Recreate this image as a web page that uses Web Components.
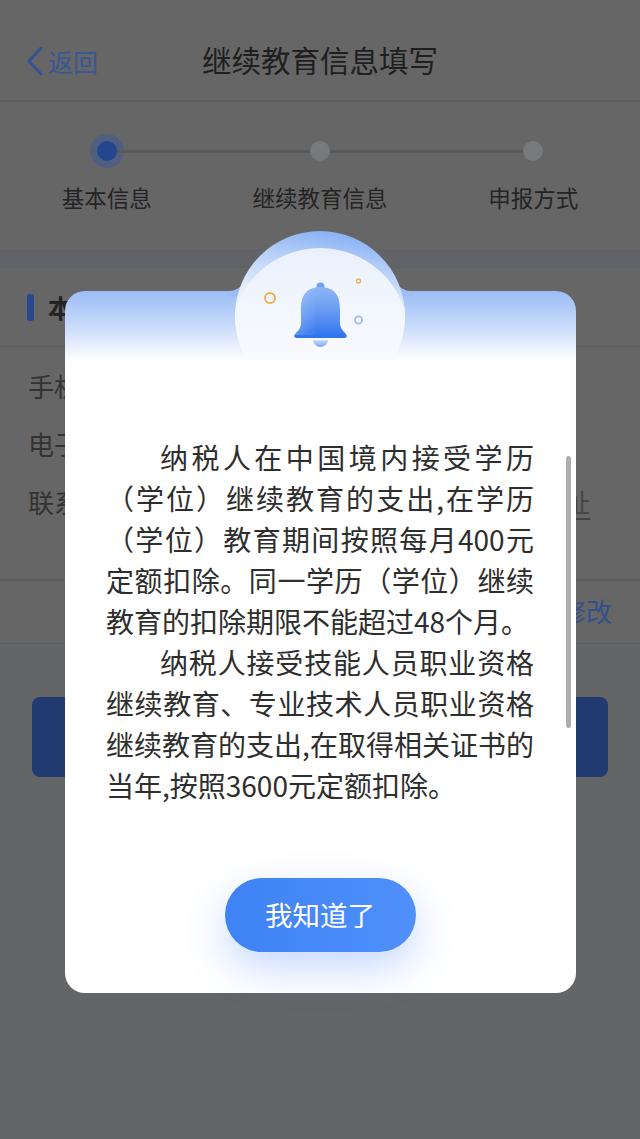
<!DOCTYPE html>
<html lang="zh-CN">
<head>
<meta charset="utf-8">
<title>继续教育信息填写</title>
<style>
html, body { margin: 0; padding: 0; background: #646566; }
body { width: 640px; height: 1139px; overflow: hidden; position: relative; font-family: "Noto Sans CJK SC", "Noto Sans", sans-serif; }
</style>
</head>
<body>
<tax-page></tax-page>
<notice-dialog>
	<p>纳税人在中国境内接受学历（学位）继续教育的支出,在学历（学位）教育期间按照每月400元定额扣除。同一学历（学位）继续教育的扣除期限不能超过48个月。</p>
	<p>纳税人接受技能人员职业资格继续教育、专业技术人员职业资格继续教育的支出,在取得相关证书的当年,按照3600元定额扣除。</p>
</notice-dialog>
<script>
// the page behind the dialog is painted directly in its dimmed colours
class NavBar extends HTMLElement {
	connectedCallback() {
		this.attachShadow({ mode: 'open' }).innerHTML = `
		<style>
		:host { display: grid; grid-template-columns: 1fr auto 1fr; align-items: center; height: 102px; padding-top: 22px; box-sizing: border-box; border-bottom: 2px solid #5d5d5d; background: #666; }
		.back { display: flex; align-items: center; gap: 5px; padding-left: 26px; font-size: 25px; color: #3a5694; }
		svg { display: block; }
		.title { font-size: 29.5px; color: #1f1f1f; line-height: 40px; padding-bottom: 4px; }
		</style>
		<div class="back">
			<svg width="17" height="30" viewBox="0 0 17 30"><path d="M15 2 L3 15 L15 28" fill="none" stroke="#345394" stroke-width="3" stroke-linecap="round" stroke-linejoin="round"/></svg>
			<span>返回</span>
		</div>
		<div class="title"><slot></slot></div>
		<div></div>`;
	}
}

class StepBar extends HTMLElement {
	connectedCallback() {
		const steps = ['基本信息', '继续教育信息', '申报方式'];
		const cells = steps.map((name, i) => `
			<div class="step">
				<div class="track">
					<i class="${i > 0 ? 'line' : ''}"></i>
					<b class="${i === 0 ? 'dot on' : 'dot'}"></b>
					<i class="${i < steps.length - 1 ? 'line' : ''}"></i>
				</div>
				<span>${name}</span>
			</div>`).join('');
		this.attachShadow({ mode: 'open' }).innerHTML = `
		<style>
		:host { display: grid; grid-template-columns: repeat(3, 1fr); height: 147px; box-sizing: border-box; padding-top: 31px; background: #666; }
		.step { display: flex; flex-direction: column; align-items: center; }
		.track { display: flex; align-items: center; width: 100%; height: 36px; }
		.track i { flex: 1; height: 3px; }
		.track i.line { background: #595959; }
		.dot { width: 20px; height: 20px; border-radius: 50%; background: #78797b; flex: none; }
		.dot.on { background: #24458f; box-shadow: 0 0 0 7px #505f7f; }
		span { margin-top: 12px; font-size: 22.5px; line-height: 32px; color: #242424; }
		</style>
		${cells}`;
	}
}

class InfoRow extends HTMLElement {
	connectedCallback() {
		this.attachShadow({ mode: 'open' }).innerHTML = `
		<style>
		:host { display: flex; justify-content: space-between; align-items: center; height: 58px; font-size: 26px; color: #333; }
		::slotted([slot=value]) { color: #444; text-decoration: underline; text-underline-offset: 5px; }
		</style>
		<slot name="label"></slot>
		<slot name="value"></slot>`;
	}
}

class TaxPage extends HTMLElement {
	connectedCallback() {
		this.attachShadow({ mode: 'open' }).innerHTML = `
		<style>
		:host { display: block; height: 1139px; background: #646566; }
		.gap { height: 19px; background: #626366; }
		.card { background: #666; }
		.head { display: flex; align-items: center; gap: 14px; height: 78px; padding-left: 27px; border-bottom: 1px solid #5f5f5f; font-size: 25px; font-weight: 700; color: #222; }
		.head i { width: 7px; height: 27px; border-radius: 3px; background: #27478f; }
		.rows { height: 234px; box-sizing: border-box; padding: 9px 50px 0 28px; border-bottom: 2px solid #5c5c5c; }
		.edit { height: 63px; box-sizing: border-box; display: flex; justify-content: flex-end; align-items: center; padding: 0 28px 4px 0; font-size: 26px; color: #344f8a; border-bottom: 1px solid #606060; }
		.next { margin: 53px 32px 0; height: 80px; border-radius: 8px; background: #213a70; }
		</style>
		<nav-bar>继续教育信息填写</nav-bar>
		<step-bar></step-bar>
		<div class="gap"></div>
		<div class="card">
			<div class="head"><i></i>本人信息</div>
			<div class="rows">
				<info-row><span slot="label">手机号码</span></info-row>
				<info-row><span slot="label">电子邮箱</span></info-row>
				<info-row><span slot="label">联系地址</span><span slot="value">详细地址</span></info-row>
			</div>
			<div class="edit">修改</div>
		</div>
		<div class="next"></div>`;
	}
}

class BellBadge extends HTMLElement {
	connectedCallback() {
		this.attachShadow({ mode: 'open' }).innerHTML = `
		<style>
		:host { display: block; width: 240px; height: 132px; }
		svg { display: block; }
		</style>
		<svg width="240" height="132" viewBox="200 228 240 132">
			<defs>
				<linearGradient id="outer" x1="0.62" y1="0" x2="0.5" y2="0.76">
					<stop offset="0" stop-color="#86aff4"/>
					<stop offset="0.28" stop-color="#bcd3f8"/>
					<stop offset="0.55" stop-color="#e6eefc"/>
					<stop offset="1" stop-color="#ffffff"/>
				</linearGradient>
				<linearGradient id="inner" x1="0" y1="0" x2="0" y2="1">
					<stop offset="0" stop-color="#eaf1fd"/>
					<stop offset="0.6" stop-color="#f8fafe"/>
					<stop offset="1" stop-color="#ffffff"/>
				</linearGradient>
				<linearGradient id="bell" x1="0" y1="0" x2="0" y2="1">
					<stop offset="0" stop-color="#8fb6f6"/>
					<stop offset="0.55" stop-color="#5f95f1"/>
					<stop offset="1" stop-color="#2d72ee"/>
				</linearGradient>
				<linearGradient id="shine" x1="0" y1="0" x2="1" y2="0">
					<stop offset="0" stop-color="#ffffff" stop-opacity=".22"/>
					<stop offset="0.5" stop-color="#ffffff" stop-opacity="0"/>
				</linearGradient>
				<linearGradient id="clap" x1="0" y1="0" x2="0" y2="1">
					<stop offset="0" stop-color="#c9dbfa"/>
					<stop offset="1" stop-color="#79a6f3"/>
				</linearGradient>
				<clipPath id="disc"><circle cx="320" cy="316" r="85"/></clipPath>
			</defs>
			<path d="M228 291 C234 291 238 289 242 285 L242 296 L228 296 Z" fill="#9cbdf7"/>
			<path d="M412 291 C406 291 402 289 398 285 L398 296 L412 296 Z" fill="#9cbdf7"/>
			<circle cx="320" cy="316" r="85" fill="url(#outer)"/>
			<circle cx="320" cy="337" r="89" fill="url(#inner)" clip-path="url(#disc)"/>
			<circle cx="270" cy="298" r="5" fill="none" stroke="#eeb154" stroke-width="2"/>
			<circle cx="358.5" cy="281" r="2" fill="none" stroke="#eeb154" stroke-width="1.4"/>
			<circle cx="358.5" cy="320" r="3.6" fill="none" stroke="#a5bdef" stroke-width="1.8"/>
			<circle cx="320.5" cy="286.5" r="4" fill="#6d9ff2"/>
			<path d="M320.5 287 C306 287 301 296 301 310 L301 324 C300.5 330 296 332 294.5 335 C293.5 337 295 338 297 338 L344 338 C346 338 347.5 337 346.5 335 C345 332 340.5 330 340 324 L340 310 C340 296 335 287 320.5 287 Z" fill="url(#bell)"/>
			<path d="M320.5 287 C306 287 301 296 301 310 L301 324 C300.5 330 296 332 294.5 335 L340 335 L340 310 C340 296 335 287 320.5 287 Z" fill="url(#shine)"/>
			<path d="M313 340 L328 340 C327.5 344 324.5 347 320.5 347 C316.5 347 313.5 344 313 340 Z" fill="url(#clap)"/>
		</svg>`;
	}
}

class NoticeDialog extends HTMLElement {
	connectedCallback() {
		this.attachShadow({ mode: 'open' }).innerHTML = `
		<style>
		:host { display: block; position: absolute; left: 65px; top: 291px; width: 511px; height: 702px; }
		.box { position: relative; height: 100%; box-sizing: border-box; padding: 146px 42px 0 41px; border-radius: 20px; background: linear-gradient(#9cbdf7, #c3d7fa 45%, #ffffff 100%) top / 100% 70px no-repeat, #fff; display: flex; flex-direction: column; align-items: center; }
		bell-badge { position: absolute; left: 135px; top: -63px; }
		.text { width: 428px; font-size: 28px; line-height: 41px; color: #2e2e2e; text-align: justify; }
		::slotted(p) { margin: 0; text-indent: 54px; }
		.thumb { position: absolute; left: 501px; top: 165px; width: 5px; height: 272px; border-radius: 3px; background: #aeaeae; }
		button { margin-top: 72px; width: 191px; height: 74px; border: 0; border-radius: 37px; background: linear-gradient(90deg, #3e82f4, #4f90fb); box-shadow: 0 16px 40px rgba(70, 130, 250, .3); color: #fff; font: 400 27.5px "Noto Sans CJK SC", sans-serif; padding: 0 0 2px; flex: none; }
		</style>
		<div class="box">
			<bell-badge></bell-badge>
			<div class="text"><slot></slot></div>
			<div class="thumb"></div>
			<button>我知道了</button>
		</div>`;
	}
}

customElements.define('nav-bar', NavBar);
customElements.define('step-bar', StepBar);
customElements.define('info-row', InfoRow);
customElements.define('tax-page', TaxPage);
customElements.define('bell-badge', BellBadge);
customElements.define('notice-dialog', NoticeDialog);
</script>
</body>
</html>
